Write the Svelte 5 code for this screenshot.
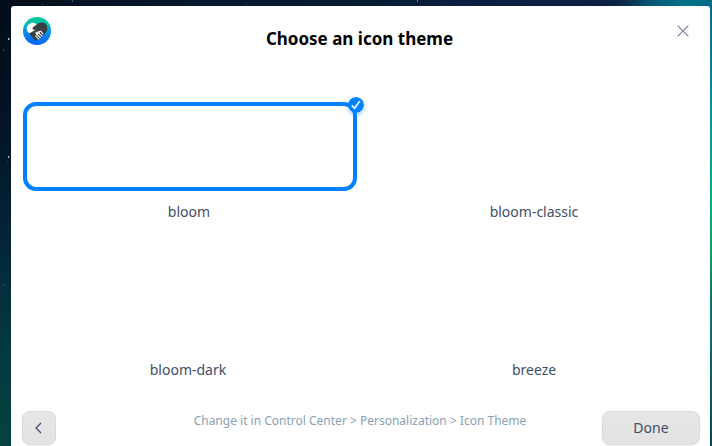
<script>
  const themes = [
    { name: 'bloom', selected: true },
    { name: 'bloom-classic' },
    { name: 'bloom-dark', narrow: true },
    { name: 'breeze' }
  ];
</script>

<div class="desktop">
  <svg class="stars" width="712" height="446" aria-hidden="true">
    <g fill="#a9b7c8">
      <rect x="8" y="38" width="1.5" height="2" />
      <rect x="8" y="156" width="1.3" height="2" />
      <rect x="417" y="0" width="1" height="2" opacity=".6" />
    </g>
    <g fill="#255575">
      <rect x="3" y="49" width="1" height="2" />
      <rect x="7" y="161" width="1" height="1" />
      <rect x="3" y="284" width="1" height="2" />
      <rect x="72" y="0" width="1" height="2" />
      <rect x="42" y="4" width="1" height="1" />
      <rect x="246" y="4" width="1" height="1" />
    </g>
  </svg>
  <main class="window">
    <header>
      <svg class="logo" width="28" height="28" viewBox="0 0 28 28" aria-hidden="true">
        <defs>
          <linearGradient id="disc" x1="0" y1="0" x2="0" y2="1">
            <stop offset="0" stop-color="#00c995" />
            <stop offset=".3" stop-color="#00b9bd" />
            <stop offset=".65" stop-color="#0880ee" />
            <stop offset="1" stop-color="#0563fa" />
          </linearGradient>
        </defs>
        <circle cx="14" cy="14" r="14" fill="url(#disc)" />
        <path d="M14 7.6C11.5 5.3 8 5.1 5.6 7.4C3 9.9 3.4 13.3 5.5 15.6L8.5 18.3L20 16L18 8Z" fill="#fff" />
        <path d="M9.8 10.6L14.6 6.8C17.5 4.7 20.8 5.1 22.8 7.3C25 9.8 24.7 13.2 22.8 15.4L20.8 17.5L12.6 24Q11.8 23.4 6 16.6L9.8 14.4L13.2 12.4Q11.2 13.4 9.9 12.3Q9 11.4 9.8 10.6Z" fill="#3b3f42" />
        <path d="M12.8 15.8L17.8 14.1L19.8 16.9M16 16.4L18.9 18.8M14.3 17.6L17.2 20.5M12.7 18.8L15.6 22" fill="none" stroke="#f6f8f8" stroke-width="1.1" stroke-linecap="round" />
        <path d="M12.7 16.2L17.3 14.7L16.4 16.4L13.4 18.4Z" fill="#f6f8f8" />
      </svg>
      <h1>Choose an icon theme</h1>
      <button class="close" aria-label="Close">
        <svg width="12" height="12" viewBox="0 0 12 12"><path d="M.7.7L11.3 11.3M11.3.7L.7 11.3" fill="none" stroke="#747b99" stroke-width="1.1" /></svg>
      </button>
    </header>

    <section class="grid">
      {#each themes as theme}
        <div class="theme">
          <div class="preview" class:selected={theme.selected}>
            {#if theme.selected}
              <svg class="badge" width="16" height="16" viewBox="0 0 16 16"><circle cx="8" cy="8" r="8" fill="#0081ff" /><path d="M3.8 8.4L6.6 11.2L11.8 4.1" fill="none" stroke="#fff" stroke-width="1.6" /></svg>
            {/if}
          </div>
          <span class:narrow={theme.narrow}>{theme.name}</span>
        </div>
      {/each}
    </section>

    <footer>
      <button class="back" aria-label="Back">
        <svg width="7" height="12" viewBox="0 0 7 12"><path d="M6 1L1 6L6 11" fill="none" stroke="#414d68" stroke-width="1.25" /></svg>
      </button>
      <p>Change it in Control Center &gt; Personalization &gt; Icon Theme</p>
      <button class="done">Done</button>
    </footer>
  </main>
</div>

<style>
  .desktop {
    position: relative;
    box-sizing: border-box;
    width: 712px;
    height: 446px;
    padding: 6px 2px 0 11px;
    overflow: hidden;
    font-family: 'Noto Sans', sans-serif;
    background:
      linear-gradient(90deg, #010e1b 0, #02172a 25%, #051c36 55%, #0b2041 65%, #0c2141 86%, #0b2c49 88%, #06556f 91%, #03718b 96%, #046a86 100%) top / 100% 8px no-repeat,
      linear-gradient(#046c87 0, #008099 15%, #009e9c 29%, #00b07c 46%, #02a761 57%, #0b7765 66%, #0c5c60 86%, #09484f 100%) right / 10px 100% no-repeat,
      linear-gradient(#010c18 0, #021426 28%, #042335 51%, #043941 78%, #06413e 100%);
  }
  .stars { position: absolute; left: 0; top: 0; }
  .window {
    position: relative;
    box-sizing: border-box;
    display: flex;
    flex-direction: column;
    height: 440px;
    padding: 0 10px 0 11px;
    background: #fff;
    border-radius: 3px 3px 0 0;
  }
  header { display: flex; justify-content: space-between; height: 96px; padding-left: 1px; box-sizing: border-box; }
  .logo { margin-top: 11px; }
  h1 { margin: 21px 0 0 2px; font-size: 17px; line-height: 24px; font-weight: 700; color: #000; white-space: nowrap; }
  button { display: flex; align-items: center; justify-content: center; padding: 0; font-family: inherit; }
  .close { width: 34px; height: 50px; border: 0; background: none; }
  .grid { display: grid; grid-template-columns: 334px 334px; grid-auto-rows: 158px; column-gap: 11px; padding-left: 1px; height: 309px; }
  .theme { display: flex; flex-direction: column; }
  .preview { position: relative; box-sizing: border-box; height: 89px; border: 4px solid transparent; border-radius: 13px; }
  .selected { border-color: #0081ff; }
  .badge { position: absolute; top: -9px; right: -11px; border-radius: 50%; box-shadow: 0 2px 4px #0081ff66; }
  .theme span { margin-top: 11px; padding-right: 2px; text-align: center; font-size: 14px; line-height: 20px; color: #414d68; }
  .theme .narrow { padding-right: 4px; }
  footer { display: flex; justify-content: space-between; }
  .back, .done {
    box-sizing: border-box;
    height: 34px;
    border: 1px solid #d8d8d8;
    border-radius: 8px;
    background: linear-gradient(#e6e6e6, #e3e3e3);
    box-shadow: 0 1px 2px #00000010;
    color: #414d68;
  }
  .back { width: 34px; padding-right: 1px; }
  .done { width: 98px; padding-bottom: 2px; font-size: 14px; }
  p { margin: 0; padding-left: 62px; font-size: 12px; line-height: 19px; color: #8aa1b4; white-space: nowrap; }
</style>
